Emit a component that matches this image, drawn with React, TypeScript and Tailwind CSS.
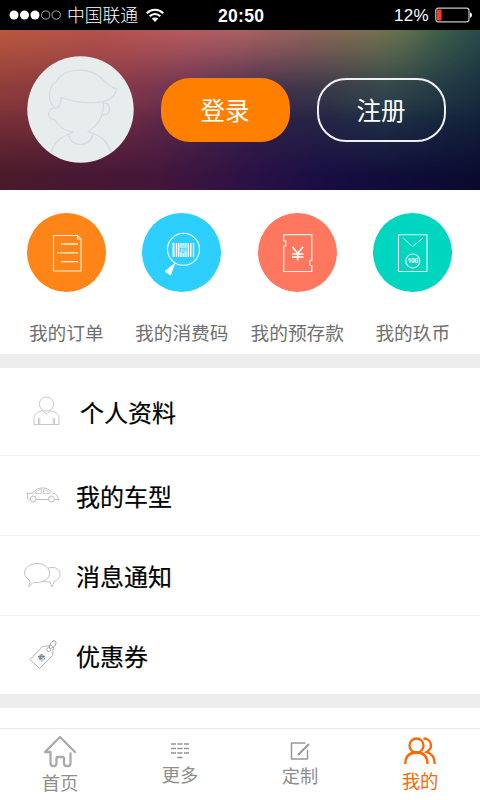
import type { ReactNode } from "react";

function Backdrop() {
  return (
    <div className="isolate grid h-[160px] w-full [grid-area:1/1]">
      <div className="[grid-area:1/1] bg-[linear-gradient(90deg,#4a1a2a_0%,#43163a_33%,#2b1146_52%,#180d43_68%,#0e0c38_85%,#0a0a2e_100%)]" />
      <div className="[grid-area:1/1] bg-[linear-gradient(90deg,#84363a_0%,#783048_26%,#582c50_40%,#33264a_54%,#282f46_68%,#263d4a_80%,#152a3e_100%)] [mask-image:linear-gradient(180deg,black_42%,transparent_92%)]" />
      <div className="[grid-area:1/1] bg-[linear-gradient(90deg,#b9583f_0%,#b4524a_20%,#b55a5c_38%,#ab6062_50%,#90625a_64%,#76704e_78%,#62704e_84%,#40604c_91%,#294b49_100%)] [mask-image:linear-gradient(180deg,black_0%,rgba(0,0,0,0.72)_14%,rgba(0,0,0,0.2)_36%,transparent_56%)]" />
      <div className="[grid-area:1/1] bg-[radial-gradient(ellipse_150px_90px_at_60px_30px,rgba(190,75,70,0.45),transparent)]" />
      <div className="[grid-area:1/1] bg-[radial-gradient(ellipse_80px_45px_at_265px_38px,rgba(50,38,62,0.5),transparent)]" />
    </div>
  );
}

function StatusBar() {
  return (
    <div className="flex h-[30px] items-center bg-black font-['Liberation_Sans','Noto_Sans_CJK_SC',sans-serif] text-white">
      <svg className="ml-[9px] shrink-0" width="53" height="12" viewBox="0 0 53 12" fill="white">
        <circle cx="5" cy="6" r="4.5" />
        <circle cx="15.5" cy="6" r="4.5" />
        <circle cx="26" cy="6" r="4.5" />
        <circle cx="36.7" cy="6" r="4.1" fill="none" stroke="#ccc" strokeWidth="0.8" />
        <circle cx="47.2" cy="6" r="4.1" fill="none" stroke="#ccc" strokeWidth="0.8" />
      </svg>
      <span className="ml-[5px] w-[72px] shrink-0 pt-[3px] text-[17.8px] leading-[27px] font-light whitespace-nowrap">中国联通</span>
      <svg className="ml-[7px] shrink-0" width="18" height="15" viewBox="0 0 18 15" fill="none" stroke="white" strokeWidth="2.1">
        <path d="M0.8 5.2C5.5 .6 12.5 .6 17.2 5.2" />
        <path d="M3.7 8.3C6.8 5.2 11.2 5.2 14.3 8.3" />
        <path d="M9 14L5.8 10.6C7.6 9 10.4 9 12.2 10.6Z" fill="white" stroke="none" />
      </svg>
      <span className="ml-[54px] w-[48px] shrink-0 pt-[2px] text-[17.5px] leading-[28px] font-bold tracking-[0.3px]">20:50</span>
      <span className="ml-[128px] w-[37px] shrink-0 pt-[2px] text-[17px] leading-[28px] tracking-[0.3px]">12%</span>
      <svg className="ml-[4px] shrink-0" width="38" height="16" viewBox="0 0 38 16">
        <rect x="0.8" y="1.2" width="33.2" height="13.6" rx="2.5" fill="none" stroke="#c8c8c8" strokeWidth="1.2" />
        <rect x="2" y="2.5" width="4.5" height="11" fill="#ff3b26" />
        <path d="M35 5.3Q37 6 37 8T35 10.7Z" fill="white" />
      </svg>
    </div>
  );
}

function Avatar() {
  return (
    <svg className="shrink-0" width="107" height="107" viewBox="0 0 107 107">
      <circle cx="53.5" cy="53.5" r="53.2" fill="#e6edec" />
      <g fill="none" stroke="#d6dcdf" strokeWidth="1.3" strokeLinejoin="round">
        <path d="M28.5 52C19 46 22 29 29 26C37 11 61 11 73 21C79 27 84 32 89 32.5C89 41 81 45 74 46C59 48 44 45 34.5 41.5C34 45 34 52 28.5 52Z" />
        <path d="M28 52C19 53 20 64 28 63.5C31 70 38 75 46.5 76C36 80 28 84 24 96" />
        <path d="M76.500 46C77 60 72 69 61 75.500C72 79 80 84 84 96" />
        <path d="M77 47.5C84 45 85 60 76 59" />
        <path d="M41.500 78.500C44 92 63 92 66 78" />
      </g>
    </svg>
  );
}

function Header() {
  return (
    <header className="grid h-[160px] border-b border-[#241c3e]">
      <Backdrop />
      <div className="z-10 flex items-start pt-[26px] pl-[26.500px] [grid-area:1/1]">
        <Avatar />
        <button className="mt-[21.500px] ml-[27px] h-[64px] w-[129px] shrink-0 rounded-[29px] bg-[#ff8000] text-[24.500px] leading-[64px] text-white">
          登录
        </button>
        <button className="mt-[21.500px] ml-[27px] h-[64px] w-[129px] shrink-0 rounded-[29px] border-2 border-[#f1f1f5] text-[24.500px] leading-[60px] text-white">
          注册
        </button>
      </div>
    </header>
  );
}

function OrderIcon() {
  return (
    <svg width="79" height="79" viewBox="0 0 79 79" fill="none" stroke="#fff1df" strokeWidth="1.1">
      <path d="M26.500 22.500H50.500L54 26V58H26.500ZM50.500 22.500V26H54" />
      <path d="M34 31H51M30 39.800H51M34 48.700H51" strokeWidth="1.3" />
    </svg>
  );
}

function CodeIcon() {
  return (
    <svg width="79" height="79" viewBox="0 0 79 79" fill="none" stroke="white">
      <circle cx="41.500" cy="36.300" r="16" strokeWidth="1.1" />
      <path d="M33 50L23 58.500L28.500 62Z" fill="white" strokeWidth="0.8" />
      <path d="M31.500 30V44M43.500 30V44" strokeWidth="2" />
      <path d="M34.500 30V44M36.700 30V44M39 30V44M41.200 30V44M46.300 30V44M48.800 30V44M51.500 30V44" strokeWidth="1.400" />
      <circle cx="41.200" cy="36.700" r="3.300" fill="#2ccfff" stroke="none" />
      <text x="41.200" y="38.700" textAnchor="middle" fill="white" stroke="none" className="text-[5.500px]">码</text>
    </svg>
  );
}

function DepositIcon() {
  return (
    <svg width="79" height="79" viewBox="0 0 79 79" fill="none" stroke="#fff1eb" strokeWidth="1.2">
      <path d="M25.700 21.700H53.800V47.500H51.800V52.500H53.800V58.500H25.700V33H27.700V28H25.700Z" />
      <path d="M34.500 34L39.700 40.500L45 34M39.700 40V47.500M34 41H45.500M34 44H45.500" stroke="white" strokeWidth="1.700" />
    </svg>
  );
}

function CoinIcon() {
  return (
    <svg width="79" height="79" viewBox="0 0 79 79" fill="none" stroke="#e9fffb" strokeWidth="1.100">
      <path d="M25.500 21.700H54V58.500H25.500Z" />
      <path d="M30 25L39.500 33.500L50 25" strokeWidth="0.900" />
      <circle cx="39.800" cy="48" r="7" strokeWidth="1.200" />
      <text x="39.800" y="50.200" textAnchor="middle" fill="white" stroke="none" className="font-['Noto_Sans',sans-serif] text-[6.300px] font-bold">100</text>
    </svg>
  );
}

function Shortcut({ label, color, children }: { label: string; color: string; children: ReactNode }) {
  return (
    <div className="flex w-[115.500px] flex-col items-center">
      <div className={`size-[79px] rounded-full ${color}`}>{children}</div>
      <span className="mt-[25px] text-[18.700px] leading-[30px] whitespace-nowrap text-[#707070]">{label}</span>
    </div>
  );
}

function PersonIcon() {
  return (
    <svg width="28" height="30" viewBox="0 0 28 30" fill="none" stroke="#c2c2c2" strokeWidth="0.900">
      <ellipse cx="13.500" cy="8" rx="7.200" ry="7" />
      <path d="M10 15C4 15.500 1 18 1 23V28.500H26V23C26 18 23 15.500 17 15L13.500 18ZM5.500 28V22M6.800 28V22M20.200 28V22M21.500 28V22" />
    </svg>
  );
}

function CarIcon() {
  return (
    <svg width="34" height="16" viewBox="0 0 34 16" fill="none" stroke="#b8b8b8" strokeWidth="0.900" strokeLinejoin="round">
      <path d="M4 12.500C1.500 12.500 1 10.500 1.500 8.500L1 6L3 6.500L6.500 6C9 2.500 13 1 17 1C21.500 1 23.500 3 26.500 6C30 7 32 8.500 32 11L33 12.500H29M10.500 12.500H22.500" />
      <path d="M9 6.500C10.500 4 12.500 2.800 15.500 2.800V6.500ZM17.500 2.800V6.500H24C22 4 20 2.800 17.500 2.800Z" strokeWidth="0.700" />
      <circle cx="7.200" cy="12" r="3" /><circle cx="25.500" cy="12" r="3" />
    </svg>
  );
}

function ChatIcon() {
  return (
    <svg width="38" height="26" viewBox="0 0 38 26" fill="none" stroke="#bbbbbb" strokeWidth="0.900" strokeLinejoin="round">
      <path d="M6 18.500C2.500 16.500 .5 14 .5 11C.5 5.500 6 1.500 13 1.500S25.500 5.500 25.500 11S20 20.500 13 20.500Q11 20.500 9.500 20.200L4.500 25Q6 22 6 18.500Z" />
      <path d="M24.500 6C31 4 36 7.500 36 12C36 15.500 33.500 18.500 30 19.300Q29.500 23 27.500 25Q27.500 22 26 20C23 20 20.500 19.500 19 19" />
    </svg>
  );
}

function CouponIcon() {
  return (
    <svg width="30" height="31" viewBox="0 0 30 31" fill="none" stroke="#aaaaaa" strokeWidth="0.900">
      <path d="M1 20.500L13.500 7.500L22.500 6.500L24.500 8.500L23.500 16.500L10.500 29.500Z" />
      <circle cx="19.800" cy="10.500" r="2" />
      <path d="M20.500 9.500C20 4 25 0 26.500 2.500C28 5 25 8.500 22.500 9" stroke="#888888" />
      <text x="12.500" y="21.300" textAnchor="middle" transform="rotate(-40 12.500 18.500)" fill="#555" stroke="none" className="text-[7.500px]">券</text>
    </svg>
  );
}

function MenuRow({ icon, label, className }: { icon: ReactNode; label: string; className: string }) {
  return (
    <div className={`flex items-center border-[#f1f1f1] text-[24px] text-black ${className}`}>
      {icon}
      <span className="pb-px leading-[34px] font-normal whitespace-nowrap [-webkit-text-stroke:0.2px_black]">{label}</span>
    </div>
  );
}

function Tab({ icon, label, className }: { icon: ReactNode; label: string; className: string }) {
  return (
    <div className={`flex w-[120px] flex-col items-center text-[18.300px] leading-[26px] ${className}`}>
      {icon}
      <span>{label}</span>
    </div>
  );
}

export default function App() {
  return (
    <div className="flex h-[800px] w-[480px] flex-col overflow-hidden bg-white font-['Noto_Sans_CJK_SC',sans-serif]">
      <StatusBar />
      <Header />
      <section className="flex h-[164px] shrink-0 pt-[23px] pl-[8.500px]">
        <Shortcut label="我的订单" color="bg-[#ff8519]"><OrderIcon /></Shortcut>
        <Shortcut label="我的消费码" color="bg-[#2ccfff]"><CodeIcon /></Shortcut>
        <Shortcut label="我的预存款" color="bg-[#ff775e]"><DepositIcon /></Shortcut>
        <Shortcut label="我的玖币" color="bg-[#00d5bf]"><CoinIcon /></Shortcut>
      </section>
      <div className="h-[14px] shrink-0 bg-[#ededed]" />
      <section className="shrink-0">
        <MenuRow className="h-[88px] border-b pt-px" label="个人资料" icon={<div className="w-[80px] pb-[3px] pl-[33px]"><PersonIcon /></div>} />
        <MenuRow className="h-[80px] border-b pt-px" label="我的车型" icon={<div className="w-[76px] pb-[3px] pl-[26px]"><CarIcon /></div>} />
        <MenuRow className="h-[80px] border-b pt-px" label="消息通知" icon={<div className="w-[76px] pb-[3px] pl-[24px]"><ChatIcon /></div>} />
        <MenuRow className="h-[78px] pt-[2px]" label="优惠券" icon={<div className="w-[76px] pb-[4px] pl-[29px]"><CouponIcon /></div>} />
      </section>
      <div className="h-[14px] shrink-0 bg-[#ededed]" />
      <div className="h-[20px] shrink-0" />
      <nav className="flex h-[72px] shrink-0 border-t border-[#e9e9e9] text-[#8e8e8e]">
        <Tab className="pt-[6px]" label="首页" icon={
          <svg className="mb-[1px]" width="34" height="33" viewBox="0 0 34 33" fill="none" stroke="#aaaaaa" strokeWidth="2.300" strokeLinejoin="round" strokeLinecap="round">
            <path d="M7.500 17H2L17 2L32 17M7.500 17V28Q7.500 31 10 31H11Q13.500 31 13.500 28V23Q13.500 22 14.500 22H19.500Q21 22 21 23V28Q21 31 23.500 31H25Q27.500 31 27.500 28V18.500" />
          </svg>} />
        <Tab className="pt-[13px]" label="更多" icon={
          <svg className="mb-[2px]" width="18" height="17" viewBox="0 0 18 17" fill="none" stroke="#949494" strokeWidth="1.400">
            <path d="M0 2H5M6.300 2H11.500M13 2H18M0 6.500H5M6.300 6.500H11.500M13 6.500H18M0 11H5M6.300 11H11.500M13 11H18M6.300 15.500H11.500" />
          </svg>} />
        <Tab className="pt-[12px]" label="定制" icon={
          <svg className="mb-[1px]" width="20" height="20" viewBox="0 0 20 20" fill="none" stroke="#999999" strokeWidth="1.500" strokeLinejoin="round">
            <path d="M15.500 2H1.500V18H17.500V9" /><path d="M8 14L19 3" strokeWidth="1.900" />
          </svg>} />
        <Tab className="pt-[8px] text-[#ff6600]" label="我的" icon={
          <svg className="mb-[2px]" width="32" height="28" viewBox="0 0 32 28" fill="none" stroke="currentColor" strokeWidth="2.300">
            <circle cx="12.500" cy="8.500" r="7" />
            <path d="M1.300 27C1.300 19.500 5.500 15.500 12.500 15.500C19.500 15.500 23.500 19.500 23.500 27M19.500 1.500C24 1.500 27 4.500 27 8.500C27 11.500 25 13.500 22.500 15C28 16.500 30.700 20.500 30.700 27" />
          </svg>} />
      </nav>
    </div>
  );
}
